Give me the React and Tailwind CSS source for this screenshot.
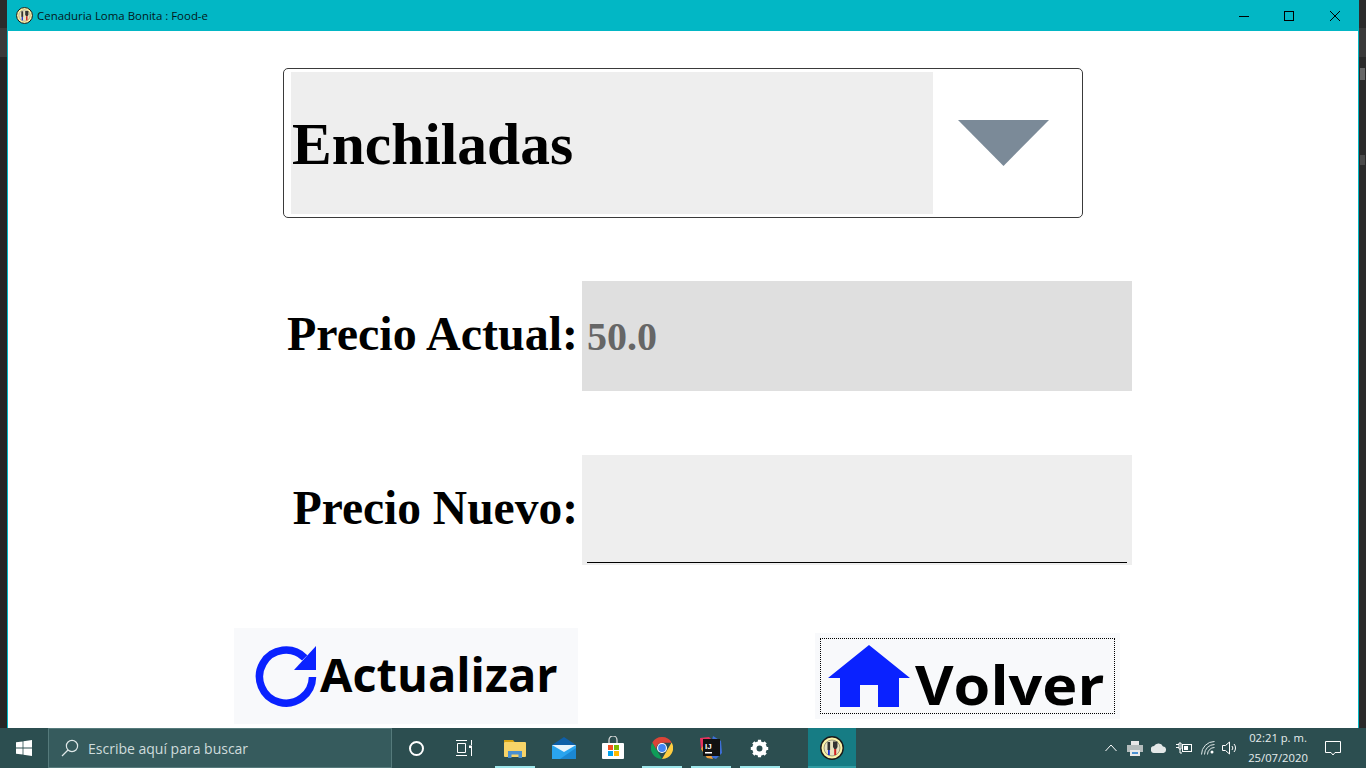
import React from "react";

const SERIF = "font-['Liberation_Serif',serif] font-bold";
const UI = "font-['Open_Sans',sans-serif]";

// app logo: little round badge with fork and knife
const AppLogo = ({ size = 17 }) => (
  <svg width={size} height={size} viewBox="0 0 24 24">
    <circle cx="12" cy="12" r="11.2" fill="#fdf3a8" stroke="#1a1a1a" strokeWidth="1.4" />
    <circle cx="12" cy="12" r="8" fill="#e8e2c0" stroke="#8a8a70" strokeWidth="0.8" />
    <rect x="7.5" y="6" width="2.6" height="8" fill="#333" />
    <rect x="8" y="14" width="1.8" height="5" fill="#1c2fd0" />
    <path d="M13 5.5h4.5v5.5l-1.2 2h-2.1l-1.2-2z" fill="#333" />
    <rect x="14.2" y="13" width="2" height="6" fill="#d02020" />
  </svg>
);

const WindowControls = () => (
  <div className="flex h-full">
    <div className="flex w-[46px] items-center justify-center">
      <svg width="10" height="10" viewBox="0 0 10 10"><path d="M0 5.5h10" stroke="#000" strokeWidth="1" /></svg>
    </div>
    <div className="flex w-[44px] items-center justify-center">
      <svg width="10" height="10" viewBox="0 0 10 10"><rect x="0.5" y="0.5" width="9" height="9" fill="none" stroke="#000" /></svg>
    </div>
    <div className="flex w-[47px] items-center justify-center pl-[1px]">
      <svg width="10" height="10" viewBox="0 0 10 10"><path d="M0 0l10 10M10 0L0 10" stroke="#000" strokeWidth="1" /></svg>
    </div>
  </div>
);

const RefreshIcon = () => (
  <svg width="64" height="64" viewBox="0 0 64 64" className="shrink-0">
    <path d="M50.7 13.8A26.500 26.500 0 1 0 58.5 33" fill="none" stroke="#0a22ff" strokeWidth="7.5" />
    <path d="M62 2V26H40Z" fill="#0a22ff" />
  </svg>
);

const HomeIcon = () => (
  <svg width="82" height="62" viewBox="0 0 82 62" className="shrink-0">
    <path d="M41 0L82 33H71V62H50V40H32V62H12V33H0Z" fill="#0a22ff" />
  </svg>
);

const TaskSlot = ({ active, children }) => (
  <div className="relative flex h-full w-[49px] items-center justify-center">
    {children}
    {active && <span className="absolute bottom-0 left-[5px] h-[2px] w-[40px] bg-[#9de6ea]" />}
  </div>
);

const TrayIcons = () => (
  <div className="flex h-full items-center">
    <span className="flex w-[24px] justify-center">
      <svg width="12" height="8" viewBox="0 0 12 8" fill="none" stroke="#fff"><path d="M.5 7L6 1l5.500 6" /></svg>
    </span>
    <span className="flex w-[24px] justify-center">
      <svg width="16" height="16" viewBox="0 0 16 16">
        <rect x="4" y="1" width="8" height="4" fill="#e8e8e8" />
        <rect y="5" width="16" height="7" fill="#b4bcbc" />
        <rect x="3" y="10" width="10" height="6" fill="#e8e8e8" />
        <rect x="5" y="12" width="6" height="2" fill="#4a90d0" />
      </svg>
    </span>
    <span className="flex w-[24px] justify-center">
      <svg width="16" height="10" viewBox="0 0 16 10" fill="#e4e8e8">
        <path d="M3.500 10a3.500 3.500 0 01-.5-7A5 5 0 0112 3.500 3.300 3.300 0 0112.500 10z" />
      </svg>
    </span>
    <span className="flex w-[25px] justify-center">
      <svg width="16" height="12" viewBox="0 0 16 12" fill="none" stroke="#fff">
        <path d="M0 2.500h3M0 5.500h3M3 1h2v6H3zM4 7v4h2" />
        <rect x="6.500" y="2.500" width="9" height="7" />
        <rect x="8" y="4" width="4" height="4" fill="#fff" stroke="none" />
      </svg>
    </span>
    <span className="flex w-[24px] justify-center">
      <svg width="14" height="14" viewBox="0 0 14 14" fill="none" stroke="#dfe8e8">
        <path d="M.5 13.500A13 13 0 0113.500 .5M3.500 13.500A10 10 0 0113.500 3.500M6.500 13.500A7 7 0 0113.500 6.500" />
        <circle cx="11" cy="11" r="1.500" fill="#fff" stroke="none" />
      </svg>
    </span>
    <span className="mr-[2px] flex w-[20px] justify-center">
      <svg width="16" height="14" viewBox="0 0 16 14" fill="none" stroke="#fff">
        <path d="M.5 4.500h3L7.500 1v12l-4-3.500h-3z" />
        <path d="M10 5a3 3 0 010 4M12 3a6 6 0 010 8" />
      </svg>
    </span>
  </div>
);

const Taskbar = () => (
  <div className={`flex h-[40px] items-center bg-[#2c4e50] text-white ${UI}`}>
    {/* Start */}
    <div className="flex h-full w-[48px] items-center justify-center">
      <svg width="16" height="16" viewBox="0 0 16 16" fill="#fff">
        <path d="M0 2.300l6.600-.9v6.200H0zM7.400 1.300L16 0v7.600H7.400zM0 8.400h6.600v6.200L0 13.700zM7.400 8.400H16V16l-8.600-1.200z" />
      </svg>
    </div>

    {/* Search */}
    <div className="flex h-full w-[344px] items-center border border-[#557a7b] bg-[#365b5d] pl-[12px]">
      <svg width="18" height="18" viewBox="0 0 18 18" fill="none" stroke="#dfe8e8" strokeWidth="1.2">
        <circle cx="11" cy="7" r="5.600" />
        <path d="M7 11l-6 6" />
      </svg>
      <span className="ml-[9px] text-[14px] text-[#cfdcdc]">Escribe aquí para buscar</span>
    </div>

    {/* Cortana, task view */}
    <div className="flex h-full w-[48px] items-center justify-center">
      <span className="h-[15px] w-[15px] rounded-full border-2 border-white" />
    </div>
    <div className="flex h-full w-[48px] items-center justify-center">
      <svg width="17" height="16" viewBox="0 0 17 16" fill="none" stroke="#fff">
        <path d="M0 .5h11M0 15.500h11M1.500 3.500h8v9h-8zM15.500 0v5M15.500 8v8" />
        <rect x="13" y="5.500" width="3" height="2.500" fill="#fff" stroke="none" />
      </svg>
    </div>

    {/* Pinned apps */}
    <div className="ml-[2px] flex h-full">
      <TaskSlot active>
        <svg width="24" height="21" viewBox="0 0 24 21">
          <path d="M1 2h9l2 2.500H1z" fill="#d9a514" />
          <rect x="1" y="4" width="22" height="15" rx="1" fill="#f8d468" />
          <path d="M5 20v-7h14v7h-3.500v-3.500h-7V20z" fill="#4a90d0" />
        </svg>
      </TaskSlot>
      <TaskSlot>
        <svg width="24" height="22" viewBox="0 0 24 22">
          <path d="M0 8L12 0l12 8z" fill="#0f5fa8" />
          <rect y="8" width="24" height="14" fill="#2aa4ee" />
          <path d="M0 8h24l-12 7z" fill="#e8f3fb" />
          <path d="M24 22H8L24 11z" fill="#1b87d2" />
        </svg>
      </TaskSlot>
      <TaskSlot>
        <svg width="24" height="24" viewBox="0 0 24 24">
          <path d="M8 7V4a4 4 0 018 0v3" fill="none" stroke="#e0e0e0" strokeWidth="1.2" />
          <rect x="1" y="7" width="22" height="16" rx="1" fill="#fff" />
          <rect x="7" y="9" width="5" height="5" fill="#f25022" />
          <rect x="13" y="9" width="5" height="5" fill="#7fba00" />
          <rect x="7" y="15" width="5" height="5" fill="#00a4ef" />
          <rect x="13" y="15" width="5" height="5" fill="#ffb900" />
        </svg>
      </TaskSlot>
      <TaskSlot active>
        <svg width="22" height="22" viewBox="0 0 48 48">
          <path d="M24 24L13.600 6A24 24 0 0145 12H24z" fill="#db4437" />
          <path d="M24 48A24 24 0 013 12l10.500 18z" fill="#0f9d58" />
          <path d="M45 12a24 24 0 01-21 36l10.500-18z" fill="#ffcd40" />
          <path d="M3 12A24 24 0 0124 0a24 24 0 0121 12H24a12 12 0 00-10.500 18z" fill="#db4437" />
          <circle cx="24" cy="24" r="11" fill="#fff" />
          <circle cx="24" cy="24" r="8.500" fill="#4285f4" />
        </svg>
      </TaskSlot>
      <TaskSlot active>
        <svg width="24" height="24" viewBox="0 0 24 24">
          <path d="M1 2l9-1 4 4-6 10-6-2z" fill="#e8325f" />
          <path d="M14 0l8 5 1 12-6 6-8-3z" fill="#3d6fd8" />
          <path d="M2 13l6 9 6 1-8-16z" fill="#f0a03c" />
          <rect x="4" y="3" width="17" height="17" fill="#111" />
          <rect x="6" y="16" width="7" height="1.500" fill="#fff" />
          <text x="6" y="13" fill="#fff" fontSize="8" fontFamily="Liberation Sans" fontWeight="700">IJ</text>
        </svg>
      </TaskSlot>
      <TaskSlot active>
        <svg width="19" height="19" viewBox="0 0 24 24" fill="none" stroke="#fff" strokeWidth="5.500">
          <circle cx="12" cy="12" r="6.500" />
          <path d="M12 1v4M12 19v4M1 12h4M19 12h4M4.200 4.200l2.800 2.800M17 17l2.800 2.800M4.200 19.800L7 17M17 7l2.800-2.800" strokeWidth="4" />
        </svg>
      </TaskSlot>
      <div className="relative ml-[24px] flex h-full w-[48px] items-center justify-center bg-[#167c84]">
        <AppLogo size={24} />
        <span className="absolute bottom-0 left-0 h-[2px] w-full bg-[#2f9aa1]" />
      </div>
    </div>

    {/* Tray */}
    <div className="ml-auto flex h-full items-center">
      <TrayIcons />
      <div className="flex w-[72px] flex-col items-center text-[11.25px] leading-[20px] text-[#e6eded]">
        <span>02:21 p. m.</span>
        <span>25/07/2020</span>
      </div>
      <div className="mr-[14px] flex w-[38px] items-center justify-center">
        <svg width="17" height="17" viewBox="0 0 17 17" fill="none" stroke="#fff">
          <path d="M.5 1.500h15v11H10l-2 2.500-2-2.500H.5z" />
        </svg>
      </div>
    </div>
  </div>
);

export default function App() {
  return (
    <div className="flex h-[768px] w-[1366px] flex-col overflow-hidden bg-[#2a2a2a]">
      <div className="flex min-h-0 flex-1">
        {/* what shows of the desktop beside the window */}
        <div className="flex w-[7px] flex-col">
          <div className="h-[28px] bg-[#2b2b2b]" />
          <div className="h-[29px] bg-[#3a3a3a]" />
          <div className="flex-1 bg-[#262626]" />
        </div>

        <div className="flex w-[1352px] flex-col border-x border-[#02b7c5] bg-white">
          <div className="flex h-[31px] items-center bg-[#02b7c5] pl-[8px]">
            <AppLogo />
            <span className={`ml-[4px] text-[11.45px] text-[#04181a] ${UI}`}>Cenaduria Loma Bonita : Food-e</span>
            <div className="ml-auto h-full">
              <WindowControls />
            </div>
          </div>

          {/* Dropdown */}
          <div className="ml-[275px] mt-[37px] flex h-[150px] w-[800px] rounded-[5px] border border-[#3a3a3a] pb-[3px] pl-[7px] pt-[3px]">
            <div className={`flex h-full w-[642px] items-center bg-[#eeeeee] pl-[1px] pt-[3px] text-[59.5px] leading-none text-black ${SERIF}`}>
              Enchiladas
            </div>
            <div className="flex flex-1 items-center justify-center pr-[8px]">
              <svg width="91" height="46" viewBox="0 0 91 46"><path d="M0 0H91L45.500 46Z" fill="#7b8a98" /></svg>
            </div>
          </div>

          {/* Precio actual */}
          <div className="mt-[63px] flex h-[110px] items-center gap-[4px]">
            <div className={`w-[570px] pb-[4px] text-right text-[48px] leading-none text-black ${SERIF}`}>Precio Actual:</div>
            <div className={`flex h-full w-[550px] items-center bg-[#dfdfdf] pl-[5px] pt-[2px] text-[40px] leading-none text-[#666666] ${SERIF}`}>
              50.0
            </div>
          </div>

          {/* Precio nuevo */}
          <div className="mt-[64px] flex h-[110px] items-center gap-[4px]">
            <div className={`w-[570px] pb-[2px] text-right text-[47.5px] leading-none text-black ${SERIF}`}>Precio Nuevo:</div>
            <div className="flex h-full w-[550px] items-end bg-[#eeeeee] px-[5px] pb-[2px]">
              <div className="h-px w-full bg-black" />
            </div>
          </div>

          {/* Buttons */}
          <div className="mt-[63px] flex items-start">
            <div className="ml-[226px] flex h-[96px] w-[344px] items-center bg-[#f8f9fb] pl-[20px]">
              <RefreshIcon />
              <span className={`mb-[3px] ml-[2px] text-[47px] font-bold leading-none text-black ${UI}`}>Actualizar</span>
            </div>
            <div className="ml-[237px] mt-[5px] h-[86px] w-[305px] bg-[#f8f9fb] p-[5px]">
              <div className="flex h-full items-center border border-dotted border-black pl-[7px]">
                <HomeIcon />
                <span className={`ml-[5px] origin-left scale-x-[1.1] pt-[15px] text-[54px] font-bold leading-none text-black ${UI}`}>Volver</span>
              </div>
            </div>
          </div>
        </div>

        <div className="flex w-[7px] flex-col">
          <div className="h-[28px] bg-[#2b2b2b]" />
          <div className="h-[29px] bg-[#3a3a3a]" />
          <div className="mx-[1px] mt-[11px] h-[12px] bg-[#666666]" />
          <div className="mx-[1px] mt-[75px] h-[10px] bg-[#4a4a4a]" />
          <div className="flex-1" />
        </div>
      </div>
      <Taskbar />
    </div>
  );
}
